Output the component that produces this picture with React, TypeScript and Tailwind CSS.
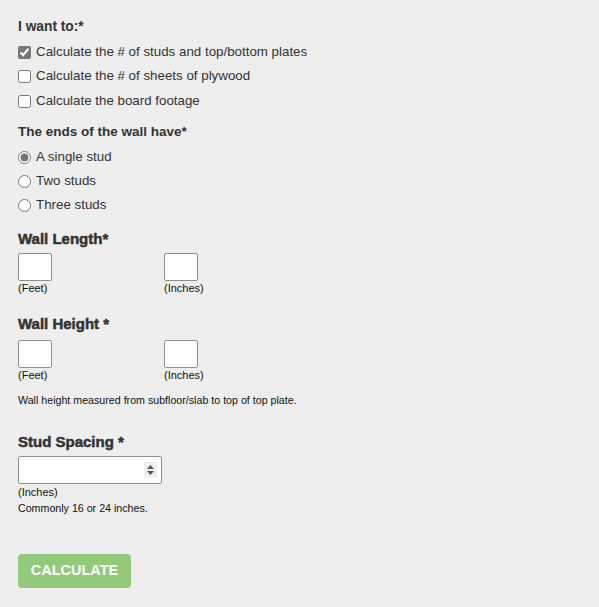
import React from "react";

function SmallInputs({ top }: { top: string }) {
  return (
    <div className={`${top} flex`}>
      <div className="w-[146px]">
        <input className="block h-[28px] w-[34px] rounded-[2px] border border-[#8f8f8f] bg-white" />
        <div className="mt-[1px] text-[11px] leading-[13px] text-[#111]">(Feet)</div>
      </div>
      <div>
        <input className="block h-[28px] w-[34px] rounded-[2px] border border-[#8f8f8f] bg-white" />
        <div className="mt-[1px] text-[11px] leading-[13px] text-[#111]">(Inches)</div>
      </div>
    </div>
  );
}

export default function App() {
  const font = "font-['Liberation_Sans',Arial,sans-serif]";
  const heavy = "text-[15px] font-bold leading-[18px] [-webkit-text-stroke:0.5px_#333333]";
  const box = "m-0 h-[13px] w-[13px] accent-[#767676]";
  return (
    <div className={`min-h-[607px] w-full bg-[#eeeeee] text-[#333333] ${font} px-[18px] pt-[19px] pb-[20px]`}>
      <div className="text-[13.75px] font-bold leading-[16px]">I want to:*</div>
      <div className="mt-[9px] flex flex-col gap-[8px] text-[13.33px] leading-[16px]">
        <label className="flex items-center gap-[5px]">
          <input type="checkbox" defaultChecked className={box} />
          <span>Calculate the # of studs and top/bottom plates</span>
        </label>
        <label className="flex items-center gap-[5px]">
          <input type="checkbox" className={box} />
          <span>Calculate the # of sheets of plywood</span>
        </label>
        <label className="flex items-center gap-[5px] pt-[1px]">
          <input type="checkbox" className={box} />
          <span>Calculate the board footage</span>
        </label>
      </div>

      <div className="mt-[15px] text-[13.5px] font-bold leading-[16px]">The ends of the wall have*</div>
      <div className="mt-[9px] flex flex-col gap-[8px] text-[13.33px] leading-[16px]">
        <label className="flex items-center gap-[5px]">
          <input type="radio" name="ends" defaultChecked className={box} />
          <span>A single stud</span>
        </label>
        <label className="flex items-center gap-[5px]">
          <input type="radio" name="ends" className={box} />
          <span>Two studs</span>
        </label>
        <label className="flex items-center gap-[5px]">
          <input type="radio" name="ends" className={box} />
          <span>Three studs</span>
        </label>
      </div>

      <div className={`mt-[17px] ${heavy}`}>Wall Length*</div>
      <SmallInputs top="mt-[5px]" />

      <div className={`mt-[20px] ${heavy}`}>Wall Height *</div>
      <SmallInputs top="mt-[7px]" />
      <div className="mt-[12px] text-[10.67px] leading-[13px] text-[#111]">
        Wall height measured from subfloor/slab to top of top plate.
      </div>

      <div className={`mt-[26px] ${heavy}`}>Stud Spacing *</div>
      <div className="mt-[5px]">
        <div className="relative h-[28px] w-[144px]">
          <input type="text" className="block h-[28px] w-[144px] rounded-[2px] border border-[#8f8f8f] bg-white px-[2px]" />
          <div className="pointer-events-none absolute right-[5px] top-[6px] flex h-[16px] w-[13px] flex-col items-center justify-center gap-[2px] bg-[#efefef]">
            <svg width="7" height="4" viewBox="0 0 7 4"><path d="M0 4 L3.5 0 L7 4 Z" fill="#555" /></svg>
            <svg width="7" height="4" viewBox="0 0 7 4"><path d="M0 0 L3.5 4 L7 0 Z" fill="#555" /></svg>
          </div>
        </div>
        <div className="mt-[2px] text-[11px] leading-[13px] text-[#111]">(Inches)</div>
        <div className="mt-[3px] text-[10.67px] leading-[13px] text-[#111]">Commonly 16 or 24 inches.</div>
      </div>

      <button className="mt-[39px] h-[34px] w-[113px] rounded-[4px] bg-[#93c97b] text-[14.5px] font-bold text-white">
        CALCULATE
      </button>
    </div>
  );
}
